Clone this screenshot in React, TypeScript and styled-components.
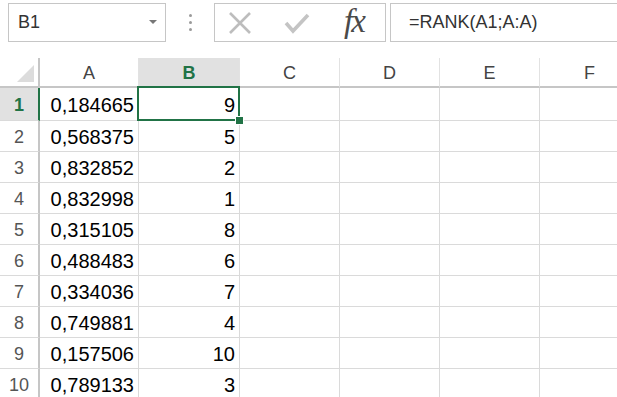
import { Fragment } from "react";
import styled, { createGlobalStyle } from "styled-components";

const GlobalStyle = createGlobalStyle`
  body {
    margin: 0;
    background: #ffffff;
    font-family: "Liberation Sans", Arial, sans-serif;
  }
`;

const GREEN = "#217346";
const GRID = "#dadada";

const Page = styled.div`
  width: 617px;
  height: 397px;
  overflow: hidden;
  background: #ffffff;
`;

const Toolbar = styled.div`
  display: flex;
  align-items: stretch;
  height: 39px;
  padding: 3px 0 0 8px;
`;

const NameBox = styled.div`
  box-sizing: border-box;
  width: 158px;
  border: 1px solid #c6c6c6;
  display: flex;
  align-items: center;
  justify-content: space-between;
  padding: 0 8px 0 9px;
  font-size: 18px;
  color: #333;
`;

const Caret = styled.span`
  width: 0;
  height: 0;
  border-left: 4px solid transparent;
  border-right: 4px solid transparent;
  border-top: 4px solid #777;
  margin-bottom: 2px;
`;

const Grip = styled.div`
  width: 48px;
  display: flex;
  flex-direction: column;
  align-items: center;
  justify-content: center;
  gap: 4px;
`;

const Dot = styled.span`
  width: 3px;
  height: 3px;
  border-radius: 50%;
  background: #9a9a9a;
`;

const Buttons = styled.div`
  box-sizing: border-box;
  width: 172px;
  border: 1px solid #c6c6c6;
  display: flex;
  align-items: center;
  padding: 0 0 0 13px;
  gap: 32px;
`;

const Fx = styled.span`
  font-family: "Liberation Serif", "Times New Roman", serif;
  font-style: italic;
  font-size: 33px;
  line-height: 1;
  color: #4a4a4a;
  margin-left: 2px;
  margin-top: -2px;
  letter-spacing: -2px;
`;

const FormulaBox = styled.div`
  box-sizing: border-box;
  flex: 1;
  margin-left: 4px;
  border: 1px solid #c6c6c6;
  border-right: none;
  display: flex;
  align-items: center;
  padding-left: 18px;
  font-size: 18px;
  color: #333;
`;

const Sheet = styled.div`
  margin-top: 16px;
  display: grid;
  grid-template-columns: 40px 99px 101px 100px 100px 100px 100px;
  grid-template-rows: 30px 33px repeat(9, 31px);
`;

const Corner = styled.div`
  box-sizing: border-box;
  position: relative;
  border-right: 2px solid #c6c6c6;
  border-bottom: 2px solid #c6c6c6;
  &::after {
    content: "";
    position: absolute;
    right: 4px;
    bottom: 4px;
    width: 0;
    height: 0;
    border-left: 17px solid transparent;
    border-bottom: 17px solid #dcdcdc;
  }
`;

const ColHeader = styled.div<{ $active?: boolean }>`
  box-sizing: border-box;
  display: flex;
  align-items: center;
  justify-content: center;
  font-size: 18px;
  color: ${(p) => (p.$active ? GREEN : "#444")};
  font-weight: ${(p) => (p.$active ? 700 : 400)};
  background: ${(p) => (p.$active ? "#e1e1e1" : "#ffffff")};
  border-right: 1px solid #e2e2e2;
  border-bottom: 2px solid ${(p) => (p.$active ? GREEN : "#c6c6c6")};
  padding-top: 2px;
`;

const RowHeader = styled.div<{ $active?: boolean }>`
  box-sizing: border-box;
  display: flex;
  align-items: center;
  justify-content: center;
  font-size: 18px;
  color: ${(p) => (p.$active ? GREEN : "#555")};
  font-weight: ${(p) => (p.$active ? 700 : 400)};
  background: ${(p) => (p.$active ? "#e1e1e1" : "#ffffff")};
  border-right: 2px solid ${(p) => (p.$active ? GREEN : "#c6c6c6")};
  border-bottom: 1px solid ${GRID};
  padding-top: 2px;
`;

const Cell = styled.div`
  box-sizing: border-box;
  position: relative;
  display: flex;
  align-items: center;
  justify-content: flex-end;
  padding: 3px 4px 0 0;
  font-size: 20px;
  color: #000;
  border-right: 1px solid ${GRID};
  border-bottom: 1px solid ${GRID};
`;

const Selection = styled.div`
  position: absolute;
  z-index: 2;
  left: -2px;
  top: -2px;
  right: -1px;
  bottom: -1px;
  border: 2px solid ${GREEN};
  pointer-events: none;
`;

const FillHandle = styled.span`
  position: absolute;
  right: -6px;
  bottom: -6px;
  width: 7px;
  height: 7px;
  background: ${GREEN};
  border: 1px solid #fff;
`;

const rows: [string, number][] = [
  ["0,184665", 9],
  ["0,568375", 5],
  ["0,832852", 2],
  ["0,832998", 1],
  ["0,315105", 8],
  ["0,488483", 6],
  ["0,334036", 7],
  ["0,749881", 4],
  ["0,157506", 10],
  ["0,789133", 3],
];

const columns = ["A", "B", "C", "D", "E", "F"];

export default function App() {
  return (
    <Page>
      <GlobalStyle />
      <Toolbar>
        <NameBox>
          B1
          <Caret />
        </NameBox>
        <Grip>
          <Dot />
          <Dot />
          <Dot />
        </Grip>
        <Buttons>
          <svg width="24" height="22" viewBox="0 0 24 22">
            <path d="M2 1 L22 21 M22 1 L2 21" stroke="#bdbdbd" strokeWidth="2.6" fill="none" />
          </svg>
          <svg width="26" height="22" viewBox="0 0 26 22">
            <path d="M2 11 L9 19 L24 3" stroke="#c4c4c4" strokeWidth="3.6" fill="none" />
          </svg>
          <Fx>fx</Fx>
        </Buttons>
        <FormulaBox>=RANK(A1;A:A)</FormulaBox>
      </Toolbar>
      <Sheet>
        <Corner />
        {columns.map((c) => (
          <ColHeader key={c} $active={c === "B"}>
            {c}
          </ColHeader>
        ))}
        {rows.map(([a, b], i) => (
          <Fragment key={i}>
            <RowHeader $active={i === 0}>{i + 1}</RowHeader>
            <Cell>{a}</Cell>
            <Cell>
              {b}
              {i === 0 ? (
                <Selection>
                  <FillHandle />
                </Selection>
              ) : null}
            </Cell>
            <Cell />
            <Cell />
            <Cell />
            <Cell />
          </Fragment>
        ))}
      </Sheet>
    </Page>
  );
}
